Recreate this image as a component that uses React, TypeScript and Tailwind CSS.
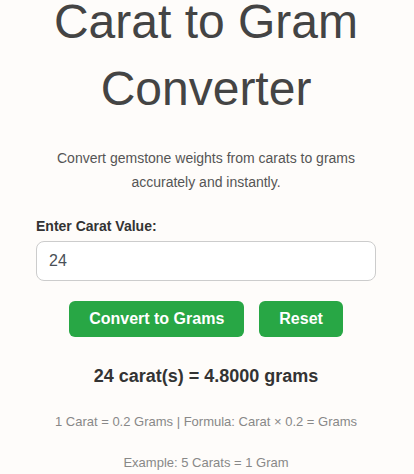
import { useState } from "react";

const App = () => {
  const [carat, setCarat] = useState("24");
  const [result, setResult] = useState("24 carat(s) = 4.8000 grams");

  const convert = () => {
    const value = parseFloat(carat);
    if (isNaN(value)) {
      setResult("Please enter a valid number");
      return;
    }
    setResult(`${value} carat(s) = ${(value * 0.2).toFixed(4)} grams`);
  };

  const reset = () => {
    setCarat("");
    setResult("");
  };

  return (
    <div
      className="min-h-screen w-full overflow-hidden bg-[#fefcfa] text-center"
      style={{ fontFamily: '"Liberation Sans", Arial, sans-serif' }}
    >
      <div className="ml-[36px] w-[340px]">
        <h1 className="mt-[-12px] text-[48px] leading-[67px] font-normal text-[#444]">
          Carat to Gram Converter
        </h1>
        <p className="mx-auto mt-[24px] w-[320px] text-[14px] leading-[24px] text-[#555]">
          Convert gemstone weights from carats to grams accurately and instantly.
        </p>

        <label className="mt-[22px] block text-left text-[14px] leading-[20px] font-bold text-[#333]">
          Enter Carat Value:
        </label>
        <input
          type="text"
          value={carat}
          onChange={(e) => setCarat(e.target.value)}
          className="mt-[5px] block h-[40px] w-full rounded-[8px] border border-[#ccc] bg-white px-[12px] text-left text-[16px] text-[#495057] outline-none"
        />

        <div className="mt-[20px] flex justify-center gap-[15px]">
          <button
            onClick={convert}
            className="h-[36px] rounded-[6px] bg-[#28a745] px-[20px] text-[16px] font-bold text-white"
          >
            Convert to Grams
          </button>
          <button
            onClick={reset}
            className="h-[36px] rounded-[6px] bg-[#28a745] px-[20px] text-[16px] font-bold text-white"
          >
            Reset
          </button>
        </div>

        <div className="mt-[27px] h-[24px] text-[18px] leading-[24px] font-bold text-[#333]">
          {result}
        </div>

        <p className="mt-[24px] text-[13px] leading-[20px] text-[#888]">
          1 Carat = 0.2 Grams | Formula: Carat × 0.2 = Grams
        </p>
        <p className="mt-[21px] text-[13px] leading-[20px] text-[#888]">
          Example: 5 Carats = 1 Gram
        </p>
      </div>
    </div>
  );
};

export default App;
